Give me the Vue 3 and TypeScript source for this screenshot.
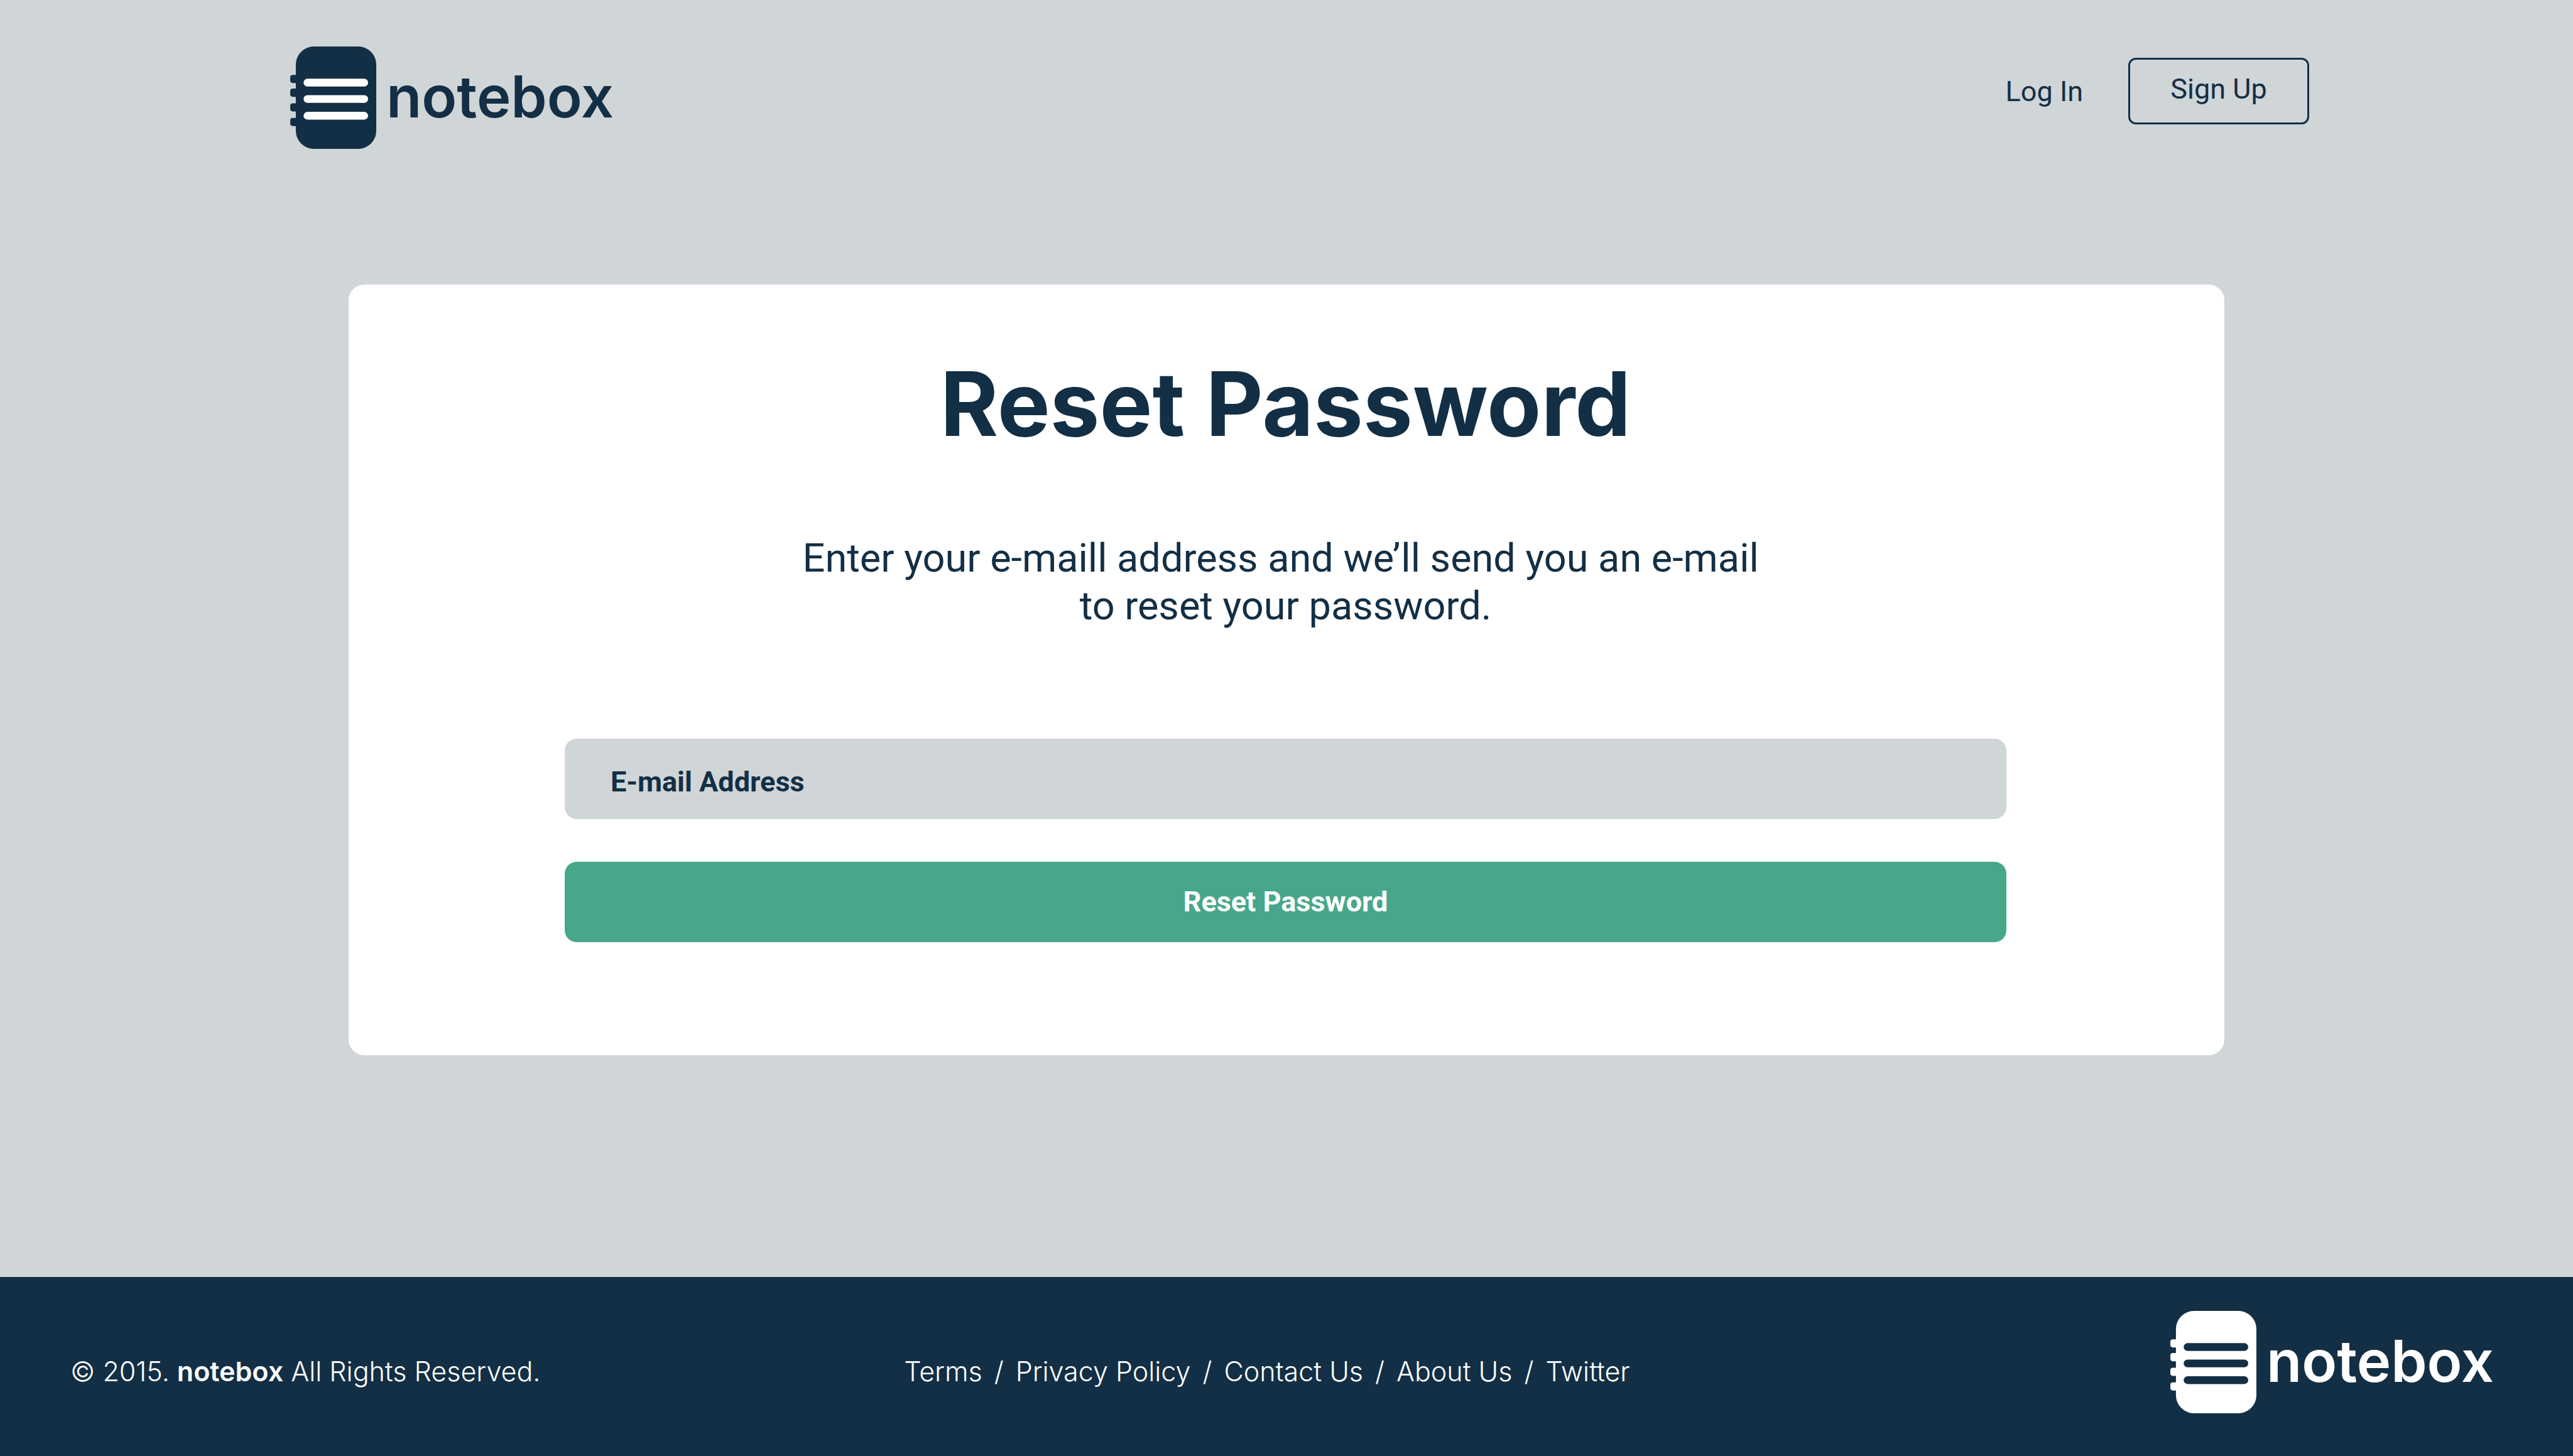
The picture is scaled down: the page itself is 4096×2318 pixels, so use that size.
<script setup lang="ts">
import { ref } from 'vue'

interface FooterLink {
  label: string
  href: string
}

const email = ref('')

const footerLinks: FooterLink[] = [
  { label: 'Terms', href: '#terms' },
  { label: 'Privacy Policy', href: '#privacy' },
  { label: 'Contact Us', href: '#contact' },
  { label: 'About Us', href: '#about' },
  { label: 'Twitter', href: '#twitter' },
]

const tabs = [66, 98, 132, 166]
const rules = [75, 113, 152]
</script>

<template>
  <div class="page">
    <header class="header">
      <a class="logo" href="#home">
        <svg class="logo-mark" viewBox="0 0 200 238" aria-hidden="true">
          <rect v-for="y in tabs" :key="y" x="0" :y="y" width="30" height="19" rx="6" fill="currentColor" />
          <rect x="13" y="0" width="187" height="238" rx="42" fill="currentColor" />
          <rect v-for="y in rules" :key="y" class="rule" x="31" :y="y" width="150" height="18" rx="9" />
        </svg>
        <span class="logo-text">notebox</span>
      </a>
      <nav class="account">
        <a class="login" href="#login">Log In</a>
        <button class="signup" type="button">Sign Up</button>
      </nav>
    </header>

    <main class="main">
      <section class="card">
        <h1 class="title">Reset Password</h1>
        <p class="lead">Enter your e-maill address and we’ll send you an e-mail&nbsp;<br />to reset your password.</p>
        <form class="form" @submit.prevent>
          <input
            v-model="email"
            class="field"
            type="email"
            placeholder="E-mail Address"
            aria-label="E-mail Address"
          />
          <button class="submit" type="submit">Reset Password</button>
        </form>
      </section>
    </main>

    <footer class="footer">
      <p class="copyright">© 2015. <strong>notebox</strong> All Rights Reserved.</p>
      <nav class="links">
        <template v-for="(link, i) in footerLinks" :key="link.label">
          <span v-if="i > 0">/</span>
          <a :href="link.href">{{ link.label }}</a>
        </template>
      </nav>
      <a class="logo logo-light" href="#home">
        <svg class="logo-mark" viewBox="0 0 200 238" aria-hidden="true">
          <rect v-for="y in tabs" :key="y" x="0" :y="y" width="30" height="19" rx="6" fill="currentColor" />
          <rect x="13" y="0" width="187" height="238" rx="42" fill="currentColor" />
          <rect v-for="y in rules" :key="y" class="rule" x="31" :y="y" width="150" height="18" rx="9" />
        </svg>
        <span class="logo-text">notebox</span>
      </a>
    </footer>
  </div>
</template>

<style>
body {
  margin: 0;
}
</style>

<style scoped>
.page {
  --navy: #132f45;
  --grey: #d0d5d8;
  --green: #48a78a;
  display: flex;
  flex-direction: column;
  box-sizing: border-box;
  min-height: 100vh;
  background: var(--grey);
  color: var(--navy);
  font-family: Roboto, sans-serif;
  font-size: 45px;
}

a {
  color: inherit;
  text-decoration: none;
}

.header {
  display: flex;
  align-items: flex-start;
  justify-content: space-between;
  padding: 74px 420px 0 462px;
}

.logo {
  display: flex;
  align-items: center;
  gap: 16px;
}

.logo-mark {
  width: 137px;
  height: 163px;
}

.rule {
  fill: #fff;
}

.logo-light {
  color: #fff;
}

.logo-light .rule {
  fill: var(--navy);
}

.logo-text {
  padding-bottom: 4px;
  font-family: Inter, sans-serif;
  font-size: 92px;
  font-weight: 600;
  line-height: 1;
}

.account {
  display: flex;
  align-items: center;
  gap: 72px;
  margin-top: 18px;
}

.signup {
  box-sizing: border-box;
  width: 288px;
  height: 106px;
  padding: 0 0 8px;
  border: 3px solid var(--navy);
  border-radius: 12px;
  background: transparent;
  color: inherit;
  font: inherit;
}

.main {
  flex: 1;
  padding: 216px 555px 160px;
}

.card {
  padding: 112px 347px 180px 344px;
  border-radius: 25px;
  background: #fff;
  text-align: center;
}

.title {
  margin: 0;
  font-family: Inter, sans-serif;
  font-size: 141px;
  font-weight: 700;
  line-height: 156px;
}

.lead {
  margin: 130px 0 0;
  font-size: 63px;
  line-height: 76px;
}

.form {
  display: flex;
  flex-direction: column;
  gap: 68px;
  margin-top: 173px;
}

.field,
.submit {
  box-sizing: border-box;
  width: 100%;
  height: 128px;
  border: 0;
  border-radius: 19px;
  font: inherit;
  font-weight: 700;
  line-height: 60px;
}

.field {
  padding: 8px 73px 0;
  background: var(--grey);
  color: var(--navy);
}

.field::placeholder {
  color: var(--navy);
  opacity: 1;
}

.submit {
  padding: 0;
  background: var(--green);
  color: #fff;
}

.footer {
  display: grid;
  grid-template-columns: 1fr auto 1fr;
  align-items: center;
  padding: 54px 126px 68px 112px;
  background: var(--navy);
  color: #fff;
  font-family: Inter, sans-serif;
  font-size: 43px;
  font-weight: 300;
}

.footer .logo {
  justify-self: end;
}

.copyright {
  margin: 28px 0 0;
}

.copyright strong {
  font-weight: 600;
}

.links {
  display: flex;
  gap: 19px;
  margin-top: 28px;
  padding-right: 48px;
}
</style>
